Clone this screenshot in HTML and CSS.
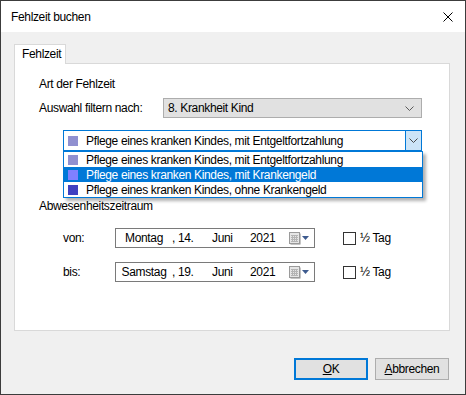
FILE: index.html
```html
<!DOCTYPE html>
<html lang="de">
<head>
    <meta charset="UTF-8" />
    <meta name="viewport" content="width=device-width, initial-scale=1.0" />
    <title>Fehlzeit buchen</title>
    <link rel="stylesheet" href="styles.css">
</head>
<body>
    <div class="window">
        <div class="titlebar">
            <span class="title">Fehlzeit buchen</span>
            <svg class="close" width="10" height="10" viewBox="0 0 10 10">
                <path d="M0.5 0.5 L9.5 9.5 M9.5 0.5 L0.5 9.5" stroke="#000" stroke-width="1" fill="none"/>
            </svg>
        </div>
        <div class="client">
            <div class="tabs">
                <div class="tab">Fehlzeit</div>
            </div>
            <div class="panel">
                <div class="heading">Art der Fehlzeit</div>
                <div class="filter">
                    <span class="label">Auswahl filtern nach:</span>
                    <div class="select">
                        <span class="select-text">8. Krankheit Kind</span>
                        <svg class="chevron" width="9" height="5" viewBox="0 0 9 5">
                            <path d="M0.5 0.5 L4.5 4.5 L8.5 0.5" stroke="#5a5a5a" fill="none"/>
                        </svg>
                    </div>
                </div>
                <div class="combo-wrap">
                    <div class="combo">
                        <span class="swatch c1"></span>
                        <span class="combo-text">Pflege eines kranken Kindes, mit Entgeltfortzahlung</span>
                        <div class="combo-btn">
                            <svg width="9" height="5" viewBox="0 0 9 5">
                                <path d="M0.5 0.5 L4.5 4.5 L8.5 0.5" stroke="#4a4a4a" fill="none"/>
                            </svg>
                        </div>
                    </div>
                    <ul class="droplist">
                        <li><span class="swatch c1"></span>Pflege eines kranken Kindes, mit Entgeltfortzahlung</li>
                        <li class="active"><span class="swatch c2"></span>Pflege eines kranken Kindes, mit Krankengeld</li>
                        <li><span class="swatch c3"></span>Pflege eines kranken Kindes, ohne Krankengeld</li>
                    </ul>
                </div>
                <div class="heading period">Abwesenheitszeitraum</div>
                <div class="date-row">
                    <span class="date-label">von:</span>
                    <div class="datebox">
                        <span class="d-day">Montag</span>
                        <span class="d-num">, 14.</span>
                        <span class="d-month">Juni</span>
                        <span class="d-year">2021</span>
                        <svg class="cal" width="21" height="13" viewBox="0 0 21 13">
                            <rect x="1.5" y="1.5" width="10" height="11" fill="#8c8c8c"/>
                            <rect x="0.5" y="0.5" width="10" height="11" fill="#e6e6e6" stroke="#9a9a9a"/>
                            <path d="M2 3.5 H9 M2 5.5 H9 M2 7.5 H9 M2 9.5 H9 M3.5 3 V10 M5.5 3 V10 M7.5 3 V10" stroke="#b4b4b4" stroke-width="1"/>
                            <path d="M13 4 H20 L16.5 8 Z" fill="#3e5b8f"/>
                        </svg>
                    </div>
                    <span class="check"></span>
                    <span class="check-label">½ Tag</span>
                </div>
                <div class="date-row">
                    <span class="date-label">bis:</span>
                    <div class="datebox">
                        <span class="d-day">Samstag</span>
                        <span class="d-num">, 19.</span>
                        <span class="d-month">Juni</span>
                        <span class="d-year">2021</span>
                        <svg class="cal" width="21" height="13" viewBox="0 0 21 13">
                            <rect x="1.5" y="1.5" width="10" height="11" fill="#8c8c8c"/>
                            <rect x="0.5" y="0.5" width="10" height="11" fill="#e6e6e6" stroke="#9a9a9a"/>
                            <path d="M2 3.5 H9 M2 5.5 H9 M2 7.5 H9 M2 9.5 H9 M3.5 3 V10 M5.5 3 V10 M7.5 3 V10" stroke="#b4b4b4" stroke-width="1"/>
                            <path d="M13 4 H20 L16.5 8 Z" fill="#3e5b8f"/>
                        </svg>
                    </div>
                    <span class="check"></span>
                    <span class="check-label">½ Tag</span>
                </div>
            </div>
            <div class="buttons">
                <button type="button" class="btn ok"><u>O</u>K</button>
                <button type="button" class="btn"><u>A</u>bbrechen</button>
            </div>
        </div>
    </div>
</body>
</html>
```

FILE: styles.css
```css
body{
    margin: 0;
    font-family: "Liberation Sans", Arial, sans-serif;
    font-size: 12px;
    letter-spacing: -0.35px;
    color: #000;
}
.window{
    width: 466px;
    height: 395px;
    box-sizing: border-box;
    border: 1px solid #3c3c3c;
    display: flex;
    flex-direction: column;
    background-color: #f0f0f0;
}
.titlebar{
    height: 31px;
    background-color: #fff;
    display: flex;
    align-items: center;
    justify-content: space-between;
    padding: 0 12px 0 10px;
}
.title{
    font-size: 12px;
}
.close{
    display: block;
}
.client{
    flex: 1;
    padding: 12px 0 0 13px;
}
.tabs{
    display: flex;
}
.tab{
    position: relative;
    z-index: 1;
    height: 19px;
    line-height: 19px;
    padding: 0 7px;
    margin-bottom: -1px;
    border: 1px solid #d9d9d9;
    border-bottom: none;
    background-color: #fff;
    box-sizing: content-box;
    width: 36px;
}
.panel{
    width: 436px;
    height: 268px;
    box-sizing: border-box;
    border: 1px solid #d9d9d9;
    background-color: #fff;
    padding: 13px 0 0 24px;
}
.heading{
    line-height: 15px;
    height: 15px;
}
.filter{
    display: flex;
    align-items: center;
    margin-top: 6px;
    height: 20px;
}
.label{
    width: 124px;
}
.select{
    width: 259px;
    height: 20px;
    box-sizing: border-box;
    border: 1px solid #adadad;
    background-color: #e1e1e1;
    display: flex;
    align-items: center;
    justify-content: space-between;
    padding: 0 7px 0 4px;
}
.chevron{
    display: block;
}
.combo-wrap{
    position: relative;
    margin: 12px 0 0 24px;
    width: 359px;
}
.combo{
    height: 21px;
    box-sizing: border-box;
    border: 1px solid #0078d7;
    display: flex;
    align-items: center;
    padding-left: 4px;
}
.combo-text{
    flex: 1;
}
.combo-btn{
    width: 15px;
    height: 100%;
    border-left: 1px solid #0078d7;
    background-color: #cce4f7;
    display: flex;
    align-items: center;
    justify-content: center;
}
.swatch{
    display: inline-block;
    width: 10px;
    height: 10px;
    margin-right: 8px;
    flex: none;
}
.c1{
    background-color: #9090d0;
}
.c2{
    background-color: #8080ff;
}
.c3{
    background-color: #4040c0;
}
.droplist{
    position: absolute;
    top: 100%;
    left: 0;
    width: 360px;
    margin: 0;
    padding: 0;
    list-style: none;
    box-sizing: border-box;
    border: 1px solid #0078d7;
    background-color: #fff;
    box-shadow: 3px 3px 3px rgba(0,0,0,0.3);
    z-index: 2;
}
.droplist li{
    height: 15px;
    display: flex;
    align-items: center;
    padding-left: 4px;
}
.droplist li.active{
    background-color: #0078d7;
    color: #fff;
}
.period{
    margin-top: 48px;
}
.date-row{
    display: flex;
    align-items: center;
    margin: 14px 0 0 24px;
    height: 20px;
}
.date-label{
    width: 52px;
}
.datebox{
    width: 200px;
    height: 20px;
    box-sizing: border-box;
    border: 1px solid #7a7a7a;
    display: flex;
    align-items: center;
    padding-left: 4px;
}
.d-day{
    width: 48px;
    text-align: center;
    margin-right: 4px;
}
.d-num{
    width: 40px;
}
.d-month{
    width: 38px;
}
.d-year{
    width: 39px;
}
.cal{
    display: block;
}
.check{
    width: 13px;
    height: 13px;
    box-sizing: border-box;
    border: 1px solid #333;
    background-color: #fff;
    margin-left: 28px;
}
.check-label{
    margin-left: 4px;
}
.buttons{
    display: flex;
    justify-content: flex-end;
    gap: 7px;
    margin-top: 27px;
    padding-right: 16px;
}
.btn{
    width: 74px;
    height: 22px;
    box-sizing: border-box;
    border: 1px solid #adadad;
    background-color: #e1e1e1;
    font-family: "Liberation Sans", Arial, sans-serif;
    font-size: 12px;
    letter-spacing: -0.35px;
    color: #000;
    padding: 0;
}
.btn.ok{
    border: 2px solid #0078d7;
}
```
